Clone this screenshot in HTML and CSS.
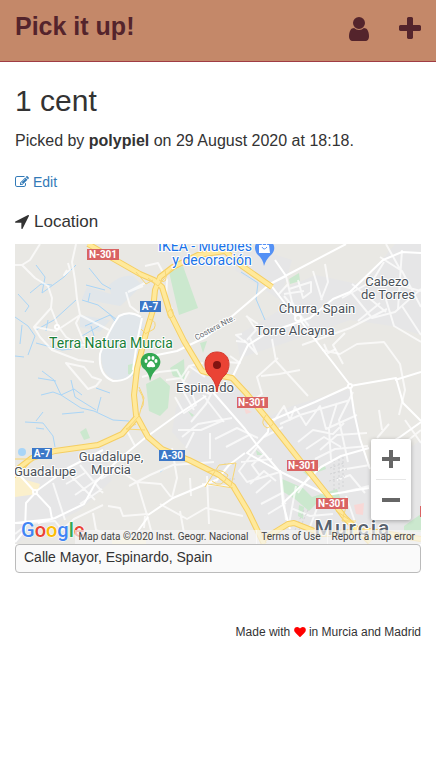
FILE: index.html
```html
<!DOCTYPE html>
<html lang="en">
<head>
<meta charset="utf-8">
<meta name="viewport" content="width=device-width, initial-scale=1">
<title>1 cent - Pick it up!</title>
<link rel="stylesheet" href="styles.css">
</head>
<body>
<header class="topbar">
  <a class="brand" href="#">Pick it up!</a>
  <nav class="topnav">
    <a href="#" aria-label="Profile"><svg class="icon-user" viewBox="0 128 1280 1536"><path d="M1280 1399q0 109-62.500 187t-150.500 78h-854q-88 0-150.500-78t-62.500-187q0-85 8.500-160.500t31.500-152 58.500-131 94-89 134.500-34.500q131 128 313 128t313-128q76 0 134.500 34.500t94 89 58.500 131 31.500 152 8.500 160.500zm-256-887q0 159-112.500 271.500t-271.500 112.500-271.500-112.500-112.500-271.500 112.500-271.500 271.500-112.500 271.500 112.500 112.500 271.500z"/></svg></a>
    <a href="#" aria-label="Add"><svg class="icon-plus" viewBox="192 128 1408 1408"><path d="M1600 736v192q0 40-28 68t-68 28h-416v416q0 40-28 68t-68 28h-192q-40 0-68-28t-28-68v-416h-416q-40 0-68-28t-28-68v-192q0-40 28-68t68-28h416v-416q0-40 28-68t68-28h192q40 0 68 28t28 68v416h416q40 0 68 28t28 68z"/></svg></a>
  </nav>
</header>
<main class="content">
  <h1>1 cent</h1>
  <p class="lead">Picked by <strong>polypiel</strong> on 29 August 2020 at 18:18.</p>
  <a class="edit" href="#"><svg class="icon-edit" viewBox="0 128 1792 1536"><path d="M888 1184l116-116-152-152-116 116v56h96v96h56zm440-720q-16-16-33 1l-350 350q-17 17-1 33t33-1l350-350q17-17 1-33zm80 594v190q0 119-84.500 203.500t-203.500 84.500h-832q-119 0-203.500-84.500t-84.500-203.500v-832q0-119 84.500-203.500t203.500-84.500h832q63 0 117 25 15 7 18 23 3 17-9 29l-49 49q-14 14-32 8-23-6-45-6h-832q-66 0-113 47t-47 113v832q0 66 47 113t113 47h832q66 0 113-47t47-113v-126q0-13 9-22l64-64q15-15 35-7t20 29zm-96-738l288 288-672 672h-288v-288zm444 132l-92 92-288-288 92-92q28-28 68-28t68 28l152 152q28 28 28 68t-28 68z"/></svg>Edit</a>
  <h2><label for="address"><svg class="icon-arrow" viewBox="192 256 1408 1408"><path d="M1593 349l-640 1280q-17 35-57 35-5 0-15-2-22-5-35.500-22.500t-13.500-39.500v-576h-576q-22 0-39.500-13.500t-22.500-35.500 4-42 29-30l1280-640q13-7 29-7 27 0 45 19 15 14 18.500 34.500t-6.500 39.500z"/></svg>Location</label></h2>
  <div class="map">
    <svg class="map-canvas" viewBox="15 244 406 300" preserveAspectRatio="xMidYMid slice" role="img" aria-label="Map of Espinardo">
      <rect class="land" x="-400" y="244" width="1200" height="300"/>
      <!-- built-up areas -->
      <g class="urban">
        <path d="M194 367L216 385 240 388 262 420 292 406 350 389 358 420 362 448 371 475 421 440V544H262L232 488 208 478 188 450 172 432 176 408Z"/>
        <path d="M280 290L316 275 362 285 395 244H421V335L392 326 350 320 300 338 240 358 236 336 280 310Z"/>
        <path d="M240 244L292 260 280 300 235 270ZM15 490L60 455 104 446 112 480 80 510 15 544Z"/>
      </g>
      <g class="lake"><path d="M113 320Q118 311 131 314L142 317 144 329 138 359 133 376 118 380Q104 378 102 363Q98 347 110 333Z"/><path d="M109 285Q121 274 133 276L142 285 128 299 120 306 82 299 87 287 111 294ZM80 315L110 320 100 332 80 327Z"/></g>
      <circle class="pond" cx="22" cy="452" r="4"/>
      <g class="park">
        <path d="M169 272L183 266 198 308 179 315Z"/>
        <path d="M146 384L160 377 170 386 168 408 160 416 149 411Z"/>
        <path d="M170 368L184 359 185 380 173 376ZM128 365L135 363 134 376 128 374Z"/>
        <path d="M289 279L299 273 300 281 290 284ZM80 432L86 428 90 438 84 440ZM200 343L207 341 203 353Z"/>
        <path d="M280 478L303 488 312 497 337 489 341 500 327 506 316 504 309 511 295 499 282 491ZM303 472L325 466 326 469 308 476ZM256 450L263 455 257 455ZM404 526L421 514V532L404 531ZM188 411L194 415 192 417ZM299 505L304 507 303 519 298 516Z"/>
      </g>
      <path class="sand" d="M15 470L26 480 40 484 37 494 15 497ZM112 538H146V544H112Z"/>
      <path class="hospital" d="M354 505L364 503 363 515 356 514ZM244 408L252 412 246 414Z"/>
      <g class="water">
        <path d="M36 265L45 277 42 293 64 277 76 265M30 293L41 284 52 285M18 294L29 306 25 312M15 317L28 326 35 336 28 355M22 325L20 344M36 330L54 320 76 300M36 343L62 350 72 349M48 320L46 331M15 356L24 357"/>
        <path d="M89 268L102 284 111 289M86 285L105 290M82 300L98 305 117 320M88 302L90 293M85 326L110 315 116 322M82 336L99 326M91 326L94 336"/>
        <path d="M42 371L54 380 61 395 74 389 82 395M38 378L56 381M41 395L53 392 61 395 81 408 94 411 113 420 129 421M71 380L75 397 96 410M101 397L97 412M96 388L110 393M62 414L84 412M25 422L43 423 53 436 55 447M36 421L43 412M36 428L44 429"/>
        <path d="M241 272L258 283 256 299 265 320M160 472L164 469"/>
      </g>
      <!-- minor streets -->
      <g class="street">
        <path d="M40 244L30 260 22 265 15 265M22 265L35 278 48 286 52 298 51 308 34 327 40 337 52 350 78 360 94 362M76 244L72 262 75 280 77 299 80 315 56 331 35 327M67 270L64 275 70 270 68 263M51 308L58 326 66 337 80 345 95 345M80 315L76 323 84 342 100 347M80 315L109 330M66 363L88 389 96 386 101 380 92 377 84 367Z"/>
        <path d="M145 266L158 263 167 280 166 300 172 309M128 292L143 286M126 292L130 306 139 313M128 292L145 283"/>
        <path d="M142 377L159 372 177 370 184 383 210 394M166 380L181 378 189 366 205 377M189 366L203 363M189 371L180 388M175 397L184 413 196 405 190 387M183 391L194 410M216 384L206 404 191 422M203 395L224 422"/>
        <path d="M53 483L65 520M70 475L95 500M80 465L103 493M66 484L85 473M75 495L98 479M80 504L102 489M101 479L117 469 137 482 147 515 153 538M137 482L161 484 171 497M108 506L120 508 123 516 148 514M129 486L150 475 173 465 214 462M172 448L177 478 172 498M190 478L191 496M207 476L209 524M160 504L187 519 206 508 243 516M178 430L201 430 224 420M182 437L198 424 232 418M186 448L194 432M210 459L210 433M145 516L144 528M15 534L29 523 55 521 62 530 74 519 103 505M93 513L96 530 120 540M180 511L184 533M202 484L236 487M125 427L135 446M215 439L237 428 258 438M226 447L249 435"/>
        <path d="M286 276L292 302 300 316M288 284L278 295M298 280L303 298 311 292 311 282 289 289M284 294L304 291M313 271L322 300M325 264L328 282 321 300M350 291L372 318 395 312 421 289M352 284L386 312M342 298L376 279 421 291M380 257L402 271 421 307M384 262L373 280M401 271L386 244M402 250L398 309M385 296L394 326 421 342M380 303L358 321M387 309L350 328 302 345M402 306L421 335M345 333L333 345 343 364M284 296L309 326M242 334L236 335 245 342 236 341"/>
        <path d="M250 338L257 354 244 340M247 316L256 330 247 340M246 316L258 324M272 339L276 361 308 396M322 350L340 354 357 344 384 342 400 364 405 390 399 415M324 344L328 353 336 349M278 358L257 377 262 394 253 400M300 370L279 374 261 376M230 356L240 363 226 362"/>
        <path d="M274 421L284 406 290 420 295 407 306 425 320 406 326 429 357 415M298 442L313 430 333 434 344 423M306 449L324 437 341 447M280 424L300 415 350 400M264 437L283 427M320 450L337 435 367 433M315 459L335 449 368 446M331 460L329 429 337 403M353 392L339 420 348 462M337 480L350 475 365 493M340 470L370 465M345 492L369 486M281 474L286 520M264 454L252 465 260 476M258 446L239 471 247 482 280 472M241 462L272 459M250 484L264 471 276 481M256 493L271 480M261 504L282 493M268 514L286 503M291 508L310 516 333 514M296 486L289 524M311 473L298 493M319 503L308 532M346 496L355 522M379 410L382 430M389 424L377 438M405 420L421 443M401 446L421 430"/>
      </g>
      <path class="pattern" d="M334 460V492M339 459V490M343 457V487M330 468L344 463M330 474L347 469M329 481L345 476M224 464H235M221 479H235M304 510L295 530M308 510L299 530"/>
      <g class="road">
        <path d="M141 317Q130 310 119 316Q108 331 100 354Q98 375 113 381Q130 381 134 370M142 318L137 342 133 370"/>
        <path d="M346 244L270 284 230 318 206 337 177 351 142 358M270 284L286 276 275 260M270 284L290 310 300 320 350 385 354 412 360 439 370 469M348 387L315 402 270 421M350 386L396 378 403 403 421 421M421 422L400 437 377 450M395 380L421 372M421 253L402 252 383 260 350 292 333 299 310 318 267 333 248 345 233 376"/>
        <path d="M211 390L245 429 257 445 279 471M245 453L229 465 216 481M269 422L268 432 258 443 247 453 279 471 327 495 369 488M280 470L283 504 290 529M282 504L321 467 341 456 369 448M206 396L177 415 145 438 118 460 96 482 84 504 55 518 38 523M35 492L50 508 52 519M35 492L25 481 15 470M36 492L26 503 25 530 15 542M35 492L68 468 103 450M216 480L173 498 148 515M148 517L135 535M15 523L52 519"/>
      </g>
      <!-- motorways: casing, then fill -->
      <g class="casing">
        <path d="M88 244L112 258 140 274 154 280 162 287 166 300 170 313 184 341 202 371 217 375 232 378 246 393 269 421 306 468 330 498 345 518 370 542"/>
        <path d="M272 287L242 266 225 251 198 255 173 267 160 277 155 290 153 310 146 333 137 369 134 395 136 415 148 437 162 449 189 460 219 475 233 486 248 511 264 544"/>
        <path d="M136 418L122 434 98 445 55 451 32 458 15 471"/>
        <path d="M262 540L288 524 294 523 322 534 370 531 421 539"/>
      </g>
      <g class="motorway">
        <path d="M88 244L112 258 140 274 154 280 162 287 166 300 170 313 184 341 202 371 217 375 232 378 246 393 269 421 306 468 330 498 345 518 370 542"/>
        <path d="M272 287L242 266 225 251 198 255 173 267 160 277 155 290 153 310 146 333 137 369 134 395 136 415 148 437 162 449 189 460 219 475 233 486 248 511 264 544"/>
        <path d="M136 418L122 434 98 445 55 451 32 458 15 471"/>
        <path d="M262 540L288 524 294 523 322 534 370 531 421 539"/>
      </g>
      <g class="ramp">
        <path d="M153 280L146 284 136 272M148 278L158 286 173 268M159 280Q169 286 165 270M149 319Q158 321 154 329L145 334M146 334L141 329M172 309Q165 311 169 318Q176 318 172 309M129 427L139 416 144 398 139 387M136 424L126 429 145 430M139 390Q147 402 141 409M15 459H36M15 478L36 457M205 487L219 465 236 463 231 486M208 484L233 488M207 472Q220 467 228 475Q222 490 212 481M266 415Q259 424 267 428Q278 424 270 418M336 511L356 524M346 507L342 521 356 521"/>
      </g>
      <circle class="junction" cx="298" cy="318" r="3"/><circle class="junction" cx="35" cy="492" r="2"/><circle class="junction" cx="57" cy="327" r="2"/><circle class="junction" cx="350" cy="386" r="2"/>
      <!-- road shields -->
      <g class="shield">
        <rect class="red" x="87" y="249" width="32" height="11"/><text x="103" y="258">N-301</text>
        <rect class="red" x="237" y="397" width="31" height="11"/><text x="252" y="406">N-301</text>
        <rect class="red" x="287" y="460" width="31" height="11"/><text x="302" y="469">N-301</text>
        <rect class="red" x="316" y="498" width="32" height="11"/><text x="332" y="507">N-301</text>
        <rect class="red" x="420" y="506" width="20" height="11"/>
        <rect class="blue" x="140" y="301" width="21" height="11"/><text x="150" y="310">A-7</text>
        <rect class="blue" x="32" y="448" width="20" height="11"/><text x="42" y="457">A-7</text>
        <rect class="blue" x="159" y="450" width="26" height="11"/><text x="172" y="459">A-30</text>
      </g>
      <!-- place labels -->
      <g class="place">
        <text x="387" y="286">Cabezo</text><text x="388" y="299">de Torres</text>
        <text x="317" y="313">Churra, Spain</text><text x="295" y="335">Torre Alcayna</text>
        <text x="205" y="392">Espinardo</text><text x="111" y="461">Guadalupe,</text><text x="111" y="474">Murcia</text><text x="45" y="476">Guadalupe</text>
      </g>
      <text class="city" x="353" y="535">Murcia</text>
      <text class="street-name" transform="translate(216 330) rotate(-28)">Costera Nte.</text>
      <text class="poi green" x="111" y="348">Terra Natura Murcia</text>
      <text class="poi azure" x="205" y="251">IKEA - Muebles</text><text class="poi azure" x="212" y="265">y decoración</text>
      <!-- zoo pin -->
      <path fill="#34a853" d="M150 381Q149 372 143 368C138 361 142 353 150 353S164 361 158 368Q152 373 150 381Z"/>
      <g fill="#fff"><ellipse cx="146" cy="361" rx="1.500" ry="2"/><ellipse cx="149" cy="358" rx="1.500" ry="2"/><ellipse cx="153" cy="358" rx="1.500" ry="2"/><ellipse cx="156" cy="361" rx="1.500" ry="2"/><path d="M151 361Q153 361 155 365Q156 368 151 367Q146 368 147 365Q149 361 151 361Z"/></g>
      <!-- shop pin -->
      <path fill="#5491f5" d="M264 266Q263 259 257 254C252 246 257 239 264 239S278 246 272 254Q266 259 264 266Z"/>
      <path fill="#fff" d="M259 245H269L270 253H259Z"/><path d="M262 247Q264 251 267 247" fill="none" stroke="#5491f5"/>
      <path d="M262 245Q264 240 267 245" fill="none" stroke="#fff"/>
      <!-- selected location -->
      <path fill="#ea4335" stroke="#d5372b" d="M217 392Q216 381 208 374C202 365 205 352 217 352S232 365 226 374Q218 381 217 392Z"/><circle cx="217" cy="365" r="4" fill="#811411"/>
      <text class="logo" x="21" y="537"><tspan fill="#4285f4">G</tspan><tspan fill="#ea4335">o</tspan><tspan fill="#fbbc05">o</tspan><tspan fill="#4285f4">g</tspan><tspan fill="#34a853">l</tspan><tspan fill="#ea4335">e</tspan></text>
    </svg>
    <div class="zoom">
      <button type="button" aria-label="Zoom in"><svg viewBox="0 0 18 18"><path d="M7 0h4v7h7v4h-7v7H7v-7H0V7h7z"/></svg></button>
      <button type="button" aria-label="Zoom out"><svg viewBox="0 0 18 18"><path d="M0 7h18v4H0z"/></svg></button>
    </div>
    <div class="credits"><span>Map data ©2020 Inst. Geogr. Nacional</span><a href="#">Terms of Use</a><a href="#">Report a map error</a></div>
  </div>
  <input class="address" id="address" type="text" value="Calle Mayor, Espinardo, Spain">
</main>
<footer class="footer">Made with <svg class="icon-heart" viewBox="0 128 1792 1536"><path d="M896 1664q-26 0-44-18l-624-602q-10-8-27.500-26t-55.500-65.500-68-97.500-53.500-121-23.500-138q0-220 127-344t351-124q62 0 126.500 21.500t120 58 95.500 68.500 76 68q36-36 76-68t95.500-68.500 120-58 126.500-21.500q224 0 351 124t127 344q0 221-229 450l-623 600q-18 18-44 18z"/></svg> in Murcia and Madrid</footer>
</body>
</html>
```
FILE: styles.css
```css
* { box-sizing: border-box; }
body { margin: 0; background: #fff; color: #333; font: 14px/20px "Liberation Sans", Arial, sans-serif; }
a { text-decoration: none; }
svg { fill: currentColor; }

.topbar { display: flex; justify-content: space-between; align-items: flex-start; height: 62px; padding: 12px 15px; background: #c48869; border-bottom: 1px solid #a03c44; }
.brand { color: #54242c; font-size: 25px; line-height: 28px; font-weight: bold; }
.topnav { display: flex; gap: 30px; padding-top: 5px; }
.topnav a { display: flex; align-items: flex-start; color: #54242c; }
.icon-user { width: 20px; height: 24px; }
.icon-plus { width: 22px; height: 22px; }

.content { padding: 0 15px; }
h1 { margin: 22px 0 12px; font-size: 30px; line-height: 34px; font-weight: normal; }
.lead { margin: 0 0 20px; font-size: 16px; line-height: 22px; }
.edit { display: flex; align-items: center; gap: 4px; color: #337ab7; }
.icon-edit { width: 14px; height: 12px; }
h2 { margin: 20px 0 12px; font-size: 17px; line-height: 20px; font-weight: normal; }
h2 label { display: flex; align-items: center; gap: 5px; }
.icon-arrow { width: 14px; height: 14px; }

.map { position: relative; height: 300px; overflow: hidden; font-family: Roboto, sans-serif; }
.map-canvas { display: block; width: 100%; height: 100%; }
.land { fill: #e9e8e4; }
.urban { fill: #e6e6e7; }
.lake { fill: #e1e6ea; }
.pond { fill: #a9d5f7; }
.park { fill: #cbe8ce; }
.sand { fill: #fbf0cc; }
.hospital { fill: #f8d8d6; }
.water, .street, .pattern, .road, .casing, .motorway, .ramp { fill: none; stroke-linejoin: round; }
.water { stroke: #a9d5f7; stroke-width: 1px; }
.street { stroke: rgba(255, 255, 255, .7); stroke-width: 2px; }
.pattern { stroke: #d3d4d6; stroke-dasharray: 2 2; }
.road { stroke: #fff; stroke-width: 2px; }
.casing { stroke: #f5ce62; stroke-width: 6px; }
.motorway { stroke: #ffe99b; stroke-width: 4px; }
.ramp { stroke: #f8d673; stroke-width: 1px; }
.junction { fill: #e9e8e4; stroke: #fff; stroke-width: 2px; }
.shield text { fill: #fff; font-size: 10px; font-weight: bold; text-anchor: middle; }
.red { fill: #d96363; }
.blue { fill: #3c78c8; }
.place text, .poi, .street-name, .city { text-anchor: middle; paint-order: stroke; stroke: #fff; stroke-width: 2px; stroke-linejoin: round; }
.place text { fill: #4b5259; font-size: 13px; }
.poi { font-size: 14px; }
.green { fill: #188038; }
.azure { fill: #1a73e8; }
.street-name { fill: #696d72; font-size: 8px; }
.city { fill: #59636e; font-size: 21px; font-weight: 500; letter-spacing: 2px; }
.logo { font-size: 20px; font-weight: 500; paint-order: stroke; stroke: #fff; stroke-width: 1px; }

.zoom { position: absolute; right: 10px; bottom: 24px; width: 40px; padding: 0 5px; background: #fff; border-radius: 2px; box-shadow: 0 1px 4px rgba(0, 0, 0, .3); }
.zoom button { display: flex; align-items: center; justify-content: center; width: 100%; height: 40px; padding: 0; border: 0; background: none; color: #666; }
.zoom button + button { height: 41px; border-top: 1px solid #e6e6e6; }
.zoom svg { width: 18px; height: 18px; }
.credits { position: absolute; right: 0; bottom: 0; display: flex; height: 14px; background: rgba(245, 245, 245, .7); color: #444; font-size: 10px; line-height: 14px; white-space: nowrap; }
.credits > * { padding: 0 6px 0 4px; color: #444; }
.credits > * + * { border-left: 1px solid rgba(255, 255, 255, .5); }
.credits span { padding-right: 8px; }

.address { display: block; width: 100%; height: 29px; padding: 0 8px 4px; border: 1px solid #bbb; border-radius: 4px; background: #fafafa; color: #333; font: 14px/20px "Liberation Sans", Arial, sans-serif; }
.footer { padding: 50px 15px 20px; font-size: 12px; line-height: 18px; text-align: right; }
.icon-heart { width: 12px; height: 10px; fill: #f00; vertical-align: -1px; }
```
